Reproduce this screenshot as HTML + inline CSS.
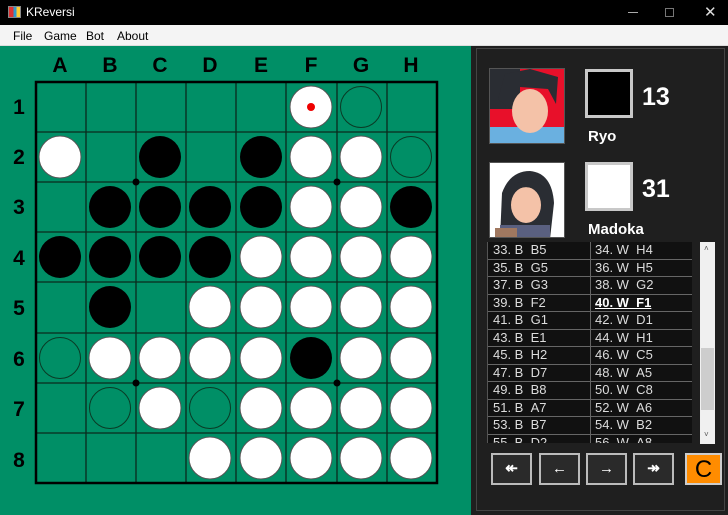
<!DOCTYPE html>
<html><head><style>
*{margin:0;padding:0;box-sizing:border-box}
body{width:728px;height:515px;overflow:hidden;background:#1f1f1f;font-family:"Liberation Sans",sans-serif;position:relative}
.title{position:absolute;left:0;top:0;width:728px;height:25px;background:#000;color:#fff;font-size:12px}
.menu{position:absolute;left:0;top:25px;width:728px;height:21px;background:#f4f4f4;font-size:12px;color:#000;border-bottom:1px solid #ddd}
.menu span{position:absolute;top:4px}
.green{position:absolute;left:0;top:46px;width:471px;height:469px;background:#008f66}
.panel{position:absolute;left:471px;top:46px;width:257px;height:469px;background:#1f1f1f}
.inner{position:absolute;left:476px;top:48px;width:249px;height:463px;border:1px solid #444}
.av{position:absolute;left:489px;width:76px;height:76px;border:1px solid #555;overflow:hidden}
.sq{position:absolute;left:585px;width:48px;height:49px;border:3px solid #c8c8c8}
.score{position:absolute;left:642px;color:#fff;font-weight:bold;font-size:25px}
.name{position:absolute;left:588px;color:#fff;font-weight:bold;font-size:15px}
.list{position:absolute;left:487px;top:242px;width:205px;height:201px;background:#111;overflow:hidden;border-left:1px solid #555}
.row{height:17.5px;border-bottom:1px solid #666;position:relative;color:#ddd;font-size:13px;line-height:16px}
.row span{position:absolute;top:0}
.row .a{left:5px}.row .b{left:107px}
.list:after{content:"";position:absolute;left:102px;top:0;width:1px;height:201px;background:#666}
.sb{position:absolute;left:700px;top:242px;width:15px;height:202px;background:#f0f0f0}
.btn{position:absolute;top:453px;width:41px;height:32px;border:2px solid #bbb;background:#2a2a2a;color:#fff;font-size:15px;text-align:center;line-height:27px;font-weight:bold}
.w{fill:#fff;stroke:#555;stroke-width:1}
.k{fill:#000}
.h{fill:none;stroke:#0a3a25;stroke-width:1}
</style></head><body>
<div class="title">
<div style="position:absolute;left:8px;top:6px;width:13px;height:12px;background:linear-gradient(90deg,#d33 0 40%,#39c 40% 70%,#fc3 70%);border:1px solid #888"></div>
<span style="position:absolute;left:26px;top:5px">KReversi</span>
<div style="position:absolute;left:628px;top:12px;width:10px;height:1px;background:#aaa"></div>
<div style="position:absolute;left:665px;top:8px;width:9px;height:9px;border:1px solid #777"></div>
<span style="position:absolute;left:704px;top:3px;font-size:15px;color:#ddd">✕</span>
</div>
<div class="menu"><span style="left:13px">File</span><span style="left:44px">Game</span><span style="left:86px">Bot</span><span style="left:117px">About</span></div>
<div class="green"></div>
<div class="panel"></div>
<div class="inner"></div>
<svg style="position:absolute;left:0;top:0" width="471" height="515" font-family="Liberation Sans" font-weight="bold" font-size="21">
<g text-anchor="middle" fill="#000">
<text x="60" y="72">A</text><text x="110" y="72">B</text><text x="160" y="72">C</text><text x="210" y="72">D</text><text x="261" y="72">E</text><text x="311" y="72">F</text><text x="361" y="72">G</text><text x="411" y="72">H</text>
<text x="19" y="114">1</text><text x="19" y="164">2</text><text x="19" y="214">3</text><text x="19" y="265">4</text><text x="19" y="315">5</text><text x="19" y="366">6</text><text x="19" y="416">7</text><text x="19" y="467">8</text>
</g>
<g stroke="#0a2a1c" stroke-width="1.3">
<line x1="86" y1="82" x2="86" y2="483"/><line x1="136" y1="82" x2="136" y2="483"/><line x1="186" y1="82" x2="186" y2="483"/><line x1="236" y1="82" x2="236" y2="483"/><line x1="286" y1="82" x2="286" y2="483"/><line x1="337" y1="82" x2="337" y2="483"/><line x1="387" y1="82" x2="387" y2="483"/>
<line x1="36" y1="132" x2="437" y2="132"/><line x1="36" y1="182" x2="437" y2="182"/><line x1="36" y1="232" x2="437" y2="232"/><line x1="36" y1="282" x2="437" y2="282"/><line x1="36" y1="333" x2="437" y2="333"/><line x1="36" y1="383" x2="437" y2="383"/><line x1="36" y1="433" x2="437" y2="433"/>
</g>
<rect x="36" y="82" width="401" height="401" fill="none" stroke="#000" stroke-width="2.5"/>
<g fill="#000"><circle cx="136" cy="182" r="3.5"/><circle cx="337" cy="182" r="3.5"/><circle cx="136" cy="383" r="3.5"/><circle cx="337" cy="383" r="3.5"/></g>
<circle class="w" cx="311" cy="107" r="21"/><circle cx="311" cy="107" r="4" fill="#e00"/><circle class="h" cx="361" cy="107" r="20.5"/>
<circle class="w" cx="60" cy="157" r="21"/><circle class="k" cx="160" cy="157" r="21"/><circle class="k" cx="261" cy="157" r="21"/><circle class="w" cx="311" cy="157" r="21"/><circle class="w" cx="361" cy="157" r="21"/><circle class="h" cx="411" cy="157" r="20.5"/>
<circle class="k" cx="110" cy="207" r="21"/><circle class="k" cx="160" cy="207" r="21"/><circle class="k" cx="210" cy="207" r="21"/><circle class="k" cx="261" cy="207" r="21"/><circle class="w" cx="311" cy="207" r="21"/><circle class="w" cx="361" cy="207" r="21"/><circle class="k" cx="411" cy="207" r="21"/>
<circle class="k" cx="60" cy="257" r="21"/><circle class="k" cx="110" cy="257" r="21"/><circle class="k" cx="160" cy="257" r="21"/><circle class="k" cx="210" cy="257" r="21"/><circle class="w" cx="261" cy="257" r="21"/><circle class="w" cx="311" cy="257" r="21"/><circle class="w" cx="361" cy="257" r="21"/><circle class="w" cx="411" cy="257" r="21"/>
<circle class="k" cx="110" cy="307" r="21"/><circle class="w" cx="210" cy="307" r="21"/><circle class="w" cx="261" cy="307" r="21"/><circle class="w" cx="311" cy="307" r="21"/><circle class="w" cx="361" cy="307" r="21"/><circle class="w" cx="411" cy="307" r="21"/>
<circle class="h" cx="60" cy="358" r="20.5"/><circle class="w" cx="110" cy="358" r="21"/><circle class="w" cx="160" cy="358" r="21"/><circle class="w" cx="210" cy="358" r="21"/><circle class="w" cx="261" cy="358" r="21"/><circle class="k" cx="311" cy="358" r="21"/><circle class="w" cx="361" cy="358" r="21"/><circle class="w" cx="411" cy="358" r="21"/>
<circle class="h" cx="110" cy="408" r="20.5"/><circle class="w" cx="160" cy="408" r="21"/><circle class="h" cx="210" cy="408" r="20.5"/><circle class="w" cx="261" cy="408" r="21"/><circle class="w" cx="311" cy="408" r="21"/><circle class="w" cx="361" cy="408" r="21"/><circle class="w" cx="411" cy="408" r="21"/>
<circle class="w" cx="210" cy="458" r="21"/><circle class="w" cx="261" cy="458" r="21"/><circle class="w" cx="311" cy="458" r="21"/><circle class="w" cx="361" cy="458" r="21"/><circle class="w" cx="411" cy="458" r="21"/>
</svg>
<div class="av" style="top:68px;background:#e8102a">
<svg width="76" height="76"><rect x="0" y="0" width="76" height="76" fill="#e8102a"/><rect x="0" y="0" width="30" height="40" fill="#2a2d33"/><rect x="0" y="58" width="76" height="18" fill="#6ab0e0"/><ellipse cx="40" cy="42" rx="18" ry="22" fill="#f4c2a8"/><path d="M8 30 L15 5 L40 0 L68 8 L66 35 L58 20 L30 18 L20 40Z" fill="#2a2d33"/></svg></div>
<div class="av" style="top:162px;background:#fff">
<svg width="76" height="76"><rect width="76" height="76" fill="#fff"/><path d="M10 76 L12 30 Q20 8 40 8 Q62 10 64 40 L60 76Z" fill="#2a2d33"/><ellipse cx="36" cy="42" rx="15" ry="18" fill="#f4c2a8"/><path d="M20 34 Q30 18 50 28 L50 22 Q35 12 20 25Z" fill="#2a2d33"/><rect x="10" y="62" width="50" height="14" fill="#5a6080"/><rect x="5" y="65" width="22" height="11" fill="#a07860"/></svg></div>
<div class="sq" style="top:69px;background:#000"></div>
<div class="sq" style="top:162px;background:#fff"></div>
<div class="score" style="top:83px">13</div>
<div class="score" style="top:175px">31</div>
<div class="name" style="top:128px">Ryo</div>
<div class="name" style="top:221px">Madoka</div>
<div class="list">
<div class="row"><span class="a">33. B &nbsp;B5</span><span class="b">34. W &nbsp;H4</span></div>
<div class="row"><span class="a">35. B &nbsp;G5</span><span class="b">36. W &nbsp;H5</span></div>
<div class="row"><span class="a">37. B &nbsp;G3</span><span class="b">38. W &nbsp;G2</span></div>
<div class="row"><span class="a">39. B &nbsp;F2</span><span class="b" style="font-weight:bold;color:#fff;text-decoration:underline">40. W &nbsp;F1</span></div>
<div class="row"><span class="a">41. B &nbsp;G1</span><span class="b">42. W &nbsp;D1</span></div>
<div class="row"><span class="a">43. B &nbsp;E1</span><span class="b">44. W &nbsp;H1</span></div>
<div class="row"><span class="a">45. B &nbsp;H2</span><span class="b">46. W &nbsp;C5</span></div>
<div class="row"><span class="a">47. B &nbsp;D7</span><span class="b">48. W &nbsp;A5</span></div>
<div class="row"><span class="a">49. B &nbsp;B8</span><span class="b">50. W &nbsp;C8</span></div>
<div class="row"><span class="a">51. B &nbsp;A7</span><span class="b">52. W &nbsp;A6</span></div>
<div class="row"><span class="a">53. B &nbsp;B7</span><span class="b">54. W &nbsp;B2</span></div>
<div class="row"><span class="a">55. B &nbsp;D2</span><span class="b">56. W &nbsp;A8</span></div>
</div>
<div class="sb"><div style="position:absolute;left:1px;top:106px;width:13px;height:62px;background:#cdcdcd"></div>
<div style="position:absolute;left:4px;top:2px;font-size:8px;color:#555">˄</div><div style="position:absolute;left:4px;top:188px;font-size:8px;color:#555">˅</div></div>
<div class="btn" style="left:491px">↞</div>
<div class="btn" style="left:539px">←</div>
<div class="btn" style="left:586px">→</div>
<div class="btn" style="left:633px">↠</div>
<div style="position:absolute;left:685px;top:453px;width:37px;height:32px;background:#ff8c00;border:2px solid #ccc;font-size:24px;line-height:30px;text-align:center;color:#000">C</div>
</body></html>
